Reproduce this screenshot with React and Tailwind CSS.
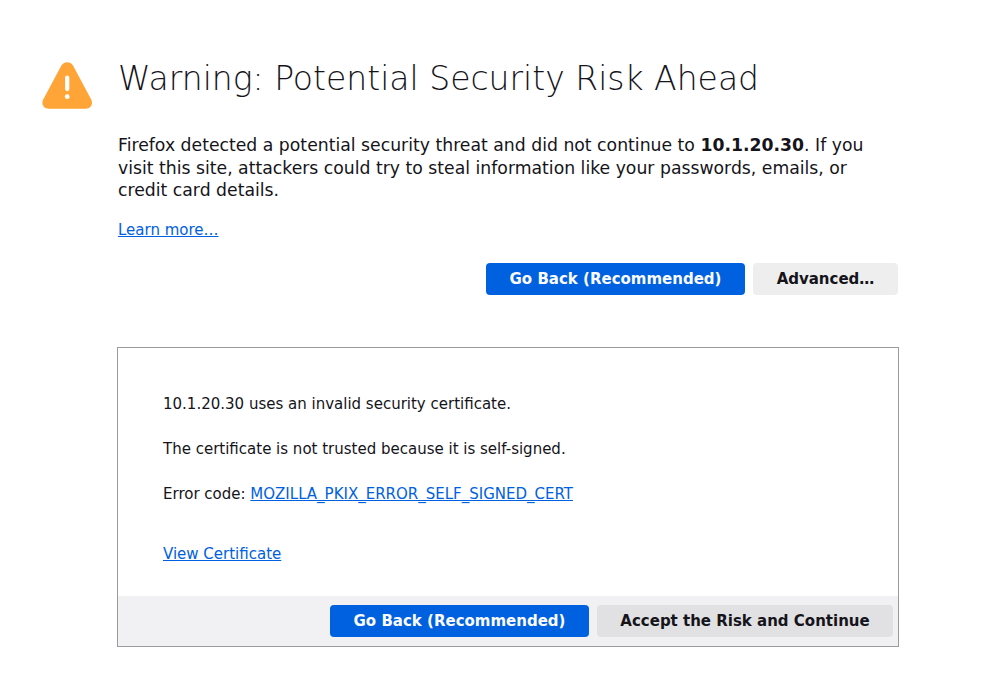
const primary = "h-8 rounded-[4px] bg-[#0061e0] pt-0.5 text-[#fbfbfe] text-[15px] font-bold whitespace-nowrap";

export default function App() {
  return (
    <main className="h-[695px] w-[982px] overflow-hidden bg-white pl-[42px] pt-[56px] font-['DejaVu_Sans',sans-serif] text-[15px] text-[#15141a]">
      <header className="flex h-[46px] items-start">
        <svg className="mt-[6px] h-[47px] w-[50px] shrink-0" viewBox="0 0 50 47">
          <path d="M19.4 3.6C22-.9 28.4-.9 31 3.6L49.2 37.6C51.4 42 48.8 46.8 43.8 46.8H6.6C1.6 46.8-1 42 1.2 37.6Z" fill="#ffa436" />
          <rect x="23.1" y="13.5" width="4.2" height="15.7" rx="2.1" fill="#fff" />
          <circle cx="25.2" cy="34.7" r="2.4" fill="#fff" />
        </svg>
        <h1 className="ml-[26px] whitespace-nowrap text-[33px] font-extralight leading-[46px]">Warning: Potential Security Risk Ahead</h1>
      </header>
      <section className="ml-[76px] mt-[32px] w-[780px]">
        <p className="whitespace-nowrap text-[17.25px] leading-[22.5px]">
          Firefox detected a potential security threat and did not continue to <b>10.1.20.30</b>. If you<br />
          visit this site, attackers could try to steal information like your passwords, emails, or<br />
          credit card details.
        </p>
        <a className="mt-[17px] block leading-[22px] text-[#0061e0] underline [text-decoration-skip-ink:none]">Learn more…</a>
        <div className="mt-[22px] flex justify-end gap-2">
          <button className={`${primary} w-[259px]`}>Go Back (Recommended)</button>
          <button className="h-8 w-[145px] rounded-[4px] bg-[#eeeeee] pt-0.5 text-[15px] font-bold">Advanced…</button>
        </div>
      </section>
      <section className="ml-[75px] mt-[52px] flex h-[300px] w-[782px] flex-col border border-[#9b9b9e]">
        <div className="flex-1 pl-[45px] pt-[45px] leading-[22px]">
          <p>10.1.20.30 uses an invalid security certificate.</p>
          <p className="mt-[23px]">The certificate is not trusted because it is self-signed.</p>
          <p className="mt-[23px]">Error code: <a className="text-[#0061e0] underline [text-decoration-skip-ink:none]">MOZILLA_PKIX_ERROR_SELF_SIGNED_CERT</a></p>
          <a className="mt-[38px] block text-[#0061e0] underline [text-decoration-skip-ink:none]">View Certificate</a>
        </div>
        <footer className="flex h-[50px] items-center justify-end gap-2 bg-[#f1f1f3] pr-[5px]">
          <button className={`${primary} w-[259px]`}>Go Back (Recommended)</button>
          <button className="h-8 w-[296px] rounded-[4px] bg-[#e1e1e3] pt-0.5 text-[15px] font-bold">Accept the Risk and Continue</button>
        </footer>
      </section>
    </main>
  );
}
